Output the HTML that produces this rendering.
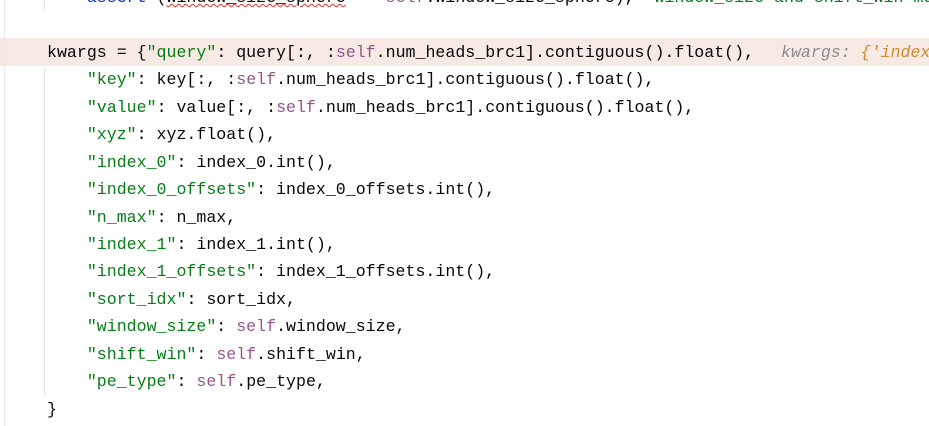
<!DOCTYPE html>
<html><head><meta charset="utf-8"><style>
html,body{margin:0;padding:0;background:#fff;width:929px;height:426px;overflow:hidden;position:relative}
.code{position:absolute;left:47px;top:-16px;font-family:"Liberation Mono",monospace;font-size:16.6px;line-height:27.45px;color:#080808}
.l{height:27.45px;white-space:pre}
.s{color:#067d17}.k{color:#0033b3}.f{color:#94558d}
.hl{position:absolute;left:0;top:38px;width:929px;height:28px;background:#f7e9e4}
.g1{position:absolute;left:4px;top:0;width:1px;height:426px;background:#ebebeb}
.g2{position:absolute;left:44px;width:1px;background:#e4e4e4}
.hint{color:#8c8c8c;font-style:italic;margin-left:7px}.ho{color:#d08a2c;font-style:italic}
.sq{text-decoration:underline wavy #e03030;text-decoration-thickness:1px}
</style></head><body>
<div class="hl"></div>
<div class="g1"></div>
<div class="g2" style="top:0;height:11px"></div>
<div class="g2" style="top:68px;height:328px"></div>
<div class="code">
<div class="l">    <span class="k">assert</span> (<span class="sq">window_size_sphere</span> == <span class="f">self</span>.window_size_sphere), <span class="s">"window_size and shift_win mu</span></div>
<div class="l"> </div>
<div class="l">kwargs = {<span class="s">"query"</span>: query[:, :<span class="f">self</span>.num_heads_brc1].contiguous().float(),  <span class="hint">kwargs: </span><span class="ho">{'index</span></div>
<div class="l">    <span class="s">"key"</span>: key[:, :<span class="f">self</span>.num_heads_brc1].contiguous().float(),</div>
<div class="l">    <span class="s">"value"</span>: value[:, :<span class="f">self</span>.num_heads_brc1].contiguous().float(),</div>
<div class="l">    <span class="s">"xyz"</span>: xyz.float(),</div>
<div class="l">    <span class="s">"index_0"</span>: index_0.int(),</div>
<div class="l">    <span class="s">"index_0_offsets"</span>: index_0_offsets.int(),</div>
<div class="l">    <span class="s">"n_max"</span>: n_max,</div>
<div class="l">    <span class="s">"index_1"</span>: index_1.int(),</div>
<div class="l">    <span class="s">"index_1_offsets"</span>: index_1_offsets.int(),</div>
<div class="l">    <span class="s">"sort_idx"</span>: sort_idx,</div>
<div class="l">    <span class="s">"window_size"</span>: <span class="f">self</span>.window_size,</div>
<div class="l">    <span class="s">"shift_win"</span>: <span class="f">self</span>.shift_win,</div>
<div class="l">    <span class="s">"pe_type"</span>: <span class="f">self</span>.pe_type,</div>
<div class="l">}</div>
</div>
</body></html>
